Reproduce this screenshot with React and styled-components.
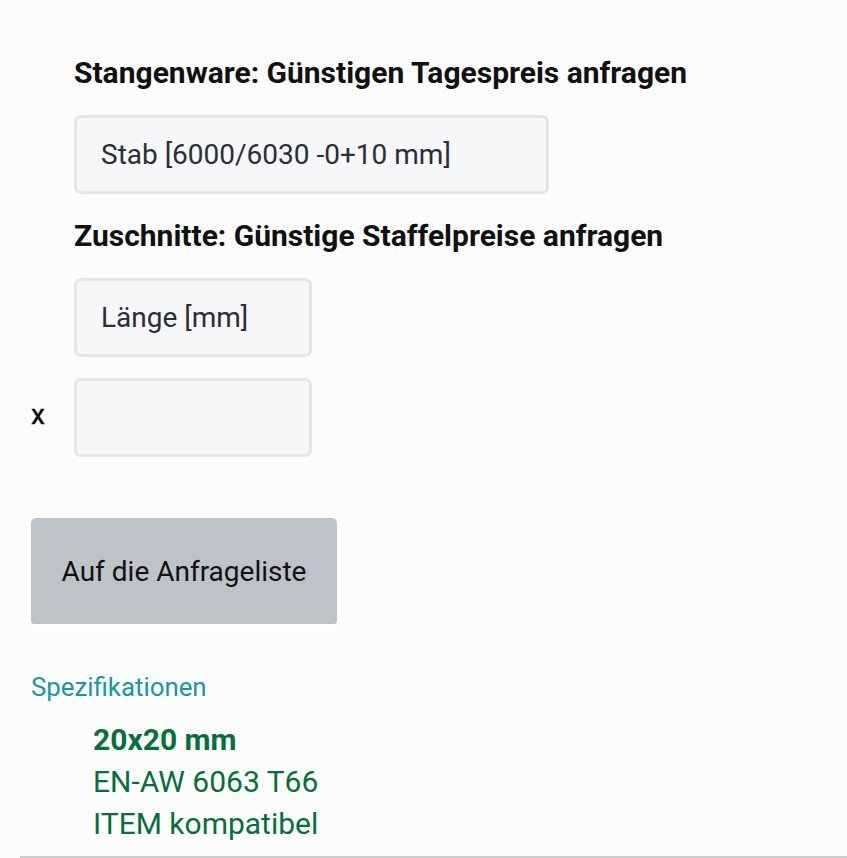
import React from 'react';
import styled, { createGlobalStyle } from 'styled-components';

const GlobalStyle = createGlobalStyle`
	html, body {
		margin: 0;
		padding: 0;
		background: #fcfcfc;
		font-family: Roboto, "Liberation Sans", Arial, sans-serif;
	}
`;

const PAGE = styled.div`
	width: 847px;
	height: 858px;
	box-sizing: border-box;
	padding: 50px 0 0 31px;
	display: flex;
	flex-direction: column;
	position: relative;
	overflow: hidden;
`;

const SECTION = styled.div`
	padding-left: 43px;
	display: flex;
	flex-direction: column;
	align-items: flex-start;
`;

const TITLE = styled.h2`
	margin: 0;
	font-size: 30px;
	line-height: 46px;
	font-weight: 700;
	color: #111;
	margin-bottom: ${(p) => p.gap || 19}px;
`;

const FIELD = styled.input`
	box-sizing: border-box;
	width: ${(p) => p.w}px;
	height: 79px;
	border: 3px solid #e5e5e5;
	border-radius: 7px;
	background: #f6f7f9;
	padding: 0 0 0 24px;
	font-family: inherit;
	font-size: 28px;
	color: #2a2e35;
	outline: none;
	&::placeholder {
		color: #2a2e35;
		opacity: 1;
	}
`;

const QTYROW = styled.div`
	display: flex;
	align-items: center;
	margin-top: 21px;
`;

const TIMES = styled.span`
	width: 43px;
	font-size: 28px;
	color: #000;
	padding-bottom: 6px;
	-webkit-text-stroke: 0.4px #000;
`;

const BUTTON = styled.button`
	margin-top: 61px;
	width: 306px;
	height: 106px;
	border: none;
	border-radius: 5px 5px 3px 3px;
	background: #bec3c7;
	box-shadow: 0 2px 0 #fff;
	font-family: inherit;
	font-size: 28px;
	color: #111;
	cursor: pointer;
	align-self: flex-start;
`;

const SPECLINK = styled.a`
	margin-top: 48px;
	font-size: 25.8px;
	line-height: 30px;
	color: #1a95a6;
	text-decoration: none;
	align-self: flex-start;
`;

const SPECS = styled.ul`
	list-style: none;
	margin: 17px 0 0;
	padding: 0 0 0 62px;
	color: #04703b;
	font-size: 30px;
	line-height: 42px;
`;

const SPEC = styled.li`
	font-weight: ${(p) => (p.bold ? 700 : 400)};
`;

const RULE = styled.hr`
	position: absolute;
	left: 20px;
	right: 0;
	bottom: 0;
	margin: 0;
	border: none;
	border-top: 2px solid #cdcdcd;
`;

const App = () => {
	return (
		<PAGE>
			<GlobalStyle />
			<SECTION>
				<TITLE>Stangenware: Günstigen Tagespreis anfragen</TITLE>
				<FIELD w={475} placeholder="Stab [6000/6030 -0+10 mm]" />
				<TITLE gap={19} style={{ marginTop: 19 }}>
					Zuschnitte: Günstige Staffelpreise anfragen
				</TITLE>
				<FIELD w={238} placeholder="Länge [mm]" />
			</SECTION>
			<QTYROW>
				<TIMES>x</TIMES>
				<FIELD w={238} />
			</QTYROW>
			<BUTTON>Auf die Anfrageliste</BUTTON>
			<SPECLINK href="#">Spezifikationen</SPECLINK>
			<SPECS>
				<SPEC bold>20x20 mm</SPEC>
				<SPEC>EN-AW 6063 T66</SPEC>
				<SPEC>ITEM kompatibel</SPEC>
			</SPECS>
			<RULE />
		</PAGE>
	);
};

export default App;
